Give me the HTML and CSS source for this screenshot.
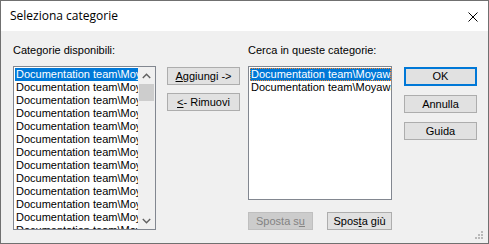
FILE: index.html
```html
<!DOCTYPE html>
<html lang="it">
<head>
<meta charset="utf-8">
<title>Seleziona categorie</title>
<link rel="stylesheet" href="styles.css">
</head>
<body>
<div class="window">
  <div class="titlebar">
    <span class="title">Seleziona categorie</span>
    <svg class="close" width="10" height="10" viewBox="0 0 10 10"><path d="M0.5 0.5 L9.5 9.5 M9.5 0.5 L0.5 9.5" stroke="#000" stroke-width="1" fill="none"/></svg>
  </div>
  <div class="content">
    <div class="col col-left">
      <div class="label">Categorie disponibili:</div>
      <div class="listbox listbox-left">
        <div class="items">
          <div class="item selected">Documentation team\Moyawa</div>
          <div class="item">Documentation team\Moyawa</div>
          <div class="item">Documentation team\Moyawa</div>
          <div class="item">Documentation team\Moyawa</div>
          <div class="item">Documentation team\Moyawa</div>
          <div class="item">Documentation team\Moyawa</div>
          <div class="item">Documentation team\Moyawa</div>
          <div class="item">Documentation team\Moyawa</div>
          <div class="item">Documentation team\Moyawa</div>
          <div class="item">Documentation team\Moyawa</div>
          <div class="item">Documentation team\Moyawa</div>
          <div class="item">Documentation team\Moyawa</div>
          <div class="item">Documentation team\Moyawa</div>
        </div>
        <div class="scrollbar">
          <div class="sb-arrow"><svg width="9" height="6" viewBox="0 0 9 6"><path d="M0.8 5 L4.5 1.3 L8.2 5" stroke="#606060" stroke-width="1.4" fill="none"/></svg></div>
          <div class="sb-thumb"></div>
          <div class="sb-track"></div>
          <div class="sb-arrow"><svg width="9" height="6" viewBox="0 0 9 6"><path d="M0.8 1 L4.5 4.7 L8.2 1" stroke="#606060" stroke-width="1.4" fill="none"/></svg></div>
        </div>
      </div>
    </div>
    <div class="col col-mid">
      <div class="btn"><span><u>A</u>ggiungi -&gt;</span></div>
      <div class="btn"><span><u>&lt;</u>- Rimuovi</span></div>
    </div>
    <div class="col col-right">
      <div class="label">Cerca in queste categorie:</div>
      <div class="listbox listbox-right">
        <div class="items">
          <div class="item selected focused">Documentation team\Moyawa</div>
          <div class="item">Documentation team\Moyawa</div>
        </div>
      </div>
      <div class="move-row">
        <div class="btn btn-move disabled"><span>Sposta s<u>u</u></span></div>
        <div class="btn btn-move"><span>Spos<u>t</u>a giù</span></div>
      </div>
    </div>
    <div class="col col-actions">
      <div class="btn btn-default"><span>OK</span></div>
      <div class="btn"><span>Annulla</span></div>
      <div class="btn"><span>Guida</span></div>
    </div>
  </div>
  <svg class="grip" width="11" height="11" viewBox="0 0 11 11">
    <rect x="6" y="0" width="2" height="2" fill="#b9b9b9"/>
    <rect x="3" y="3" width="2" height="2" fill="#b9b9b9"/>
    <rect x="6" y="3" width="2" height="2" fill="#b9b9b9"/>
    <rect x="0" y="6" width="2" height="2" fill="#b9b9b9"/>
    <rect x="3" y="6" width="2" height="2" fill="#b9b9b9"/>
    <rect x="6" y="6" width="2" height="2" fill="#b9b9b9"/>
  </svg>
</div>
</body>
</html>
```
FILE: styles.css
```css
* { box-sizing: border-box; }
html, body { margin: 0; padding: 0; background: #ffffff; }
body { font-family: "Liberation Sans", Arial, sans-serif; font-size: 11px; color: #000; }

.window {
  position: relative;
  width: 489px;
  height: 244px;
  border: 1px solid #707070;
  background: #f0f0f0;
  display: flex;
  flex-direction: column;
  overflow: hidden;
}

.titlebar {
  height: 30px;
  background: #ffffff;
  display: flex;
  align-items: center;
  justify-content: space-between;
  padding: 0 10px 0 9px;
  flex: none;
}
.title {
  font-family: "Open Sans", "Noto Sans", sans-serif;
  font-size: 12px;
  line-height: 16px;
}
.close { display: block; margin-top: 1px; }

.content {
  flex: 1;
  display: flex;
  padding: 13px 0 0 12px;
}

.col { display: flex; flex-direction: column; }
.col-left { width: 143px; }
.col-mid { width: 73px; margin-left: 11px; padding-top: 23px; gap: 8px; }
.col-right { width: 144px; margin-left: 8px; }
.col-actions { width: 73px; margin-left: 12px; padding-top: 23px; gap: 9px; }

.label { height: 13px; line-height: 13px; margin-bottom: 9px; white-space: nowrap; }

.listbox {
  background: #ffffff;
  border: 1px solid #828790;
  display: flex;
  overflow: hidden;
}
.listbox-left { height: 164px; }
.listbox-right { height: 134px; }

.items {
  flex: 1;
  min-width: 0;
  padding: 1px 0 0 1px;
  overflow: hidden;
}
.item {
  height: 13px;
  line-height: 13px;
  padding-left: 1px;
  white-space: nowrap;
  overflow: hidden;
}
.item.selected { background: #0078d7; color: #ffffff; }
.item.focused { outline: 1px dotted #ff8728; outline-offset: -1px; }

.scrollbar {
  width: 17px;
  flex: none;
  background: #f0f0f0;
  display: flex;
  flex-direction: column;
}
.sb-arrow {
  height: 17px;
  display: flex;
  align-items: center;
  justify-content: center;
  flex: none;
}
.sb-arrow svg { display: block; }
.sb-thumb {
  height: 17px;
  margin: 0 1px;
  background: #cdcdcd;
  flex: none;
}
.sb-track { flex: 1; }

.btn {
  height: 18px;
  background: #e1e1e1;
  border: 1px solid #adadad;
  display: flex;
  align-items: center;
  justify-content: center;
  white-space: nowrap;
  line-height: 13px;
}
.btn u { text-decoration: underline; text-underline-offset: 1px; }
.btn-default { border: 2px solid #0078d7; height: 19px; }

.move-row {
  display: flex;
  gap: 14px;
  margin-top: 12px;
}
.btn-move { width: 65px; }
.btn.disabled { background: #cccccc; border-color: #bfbfbf; color: #838383; }

.grip {
  position: absolute;
  right: 2px;
  bottom: 1px;
}
```
